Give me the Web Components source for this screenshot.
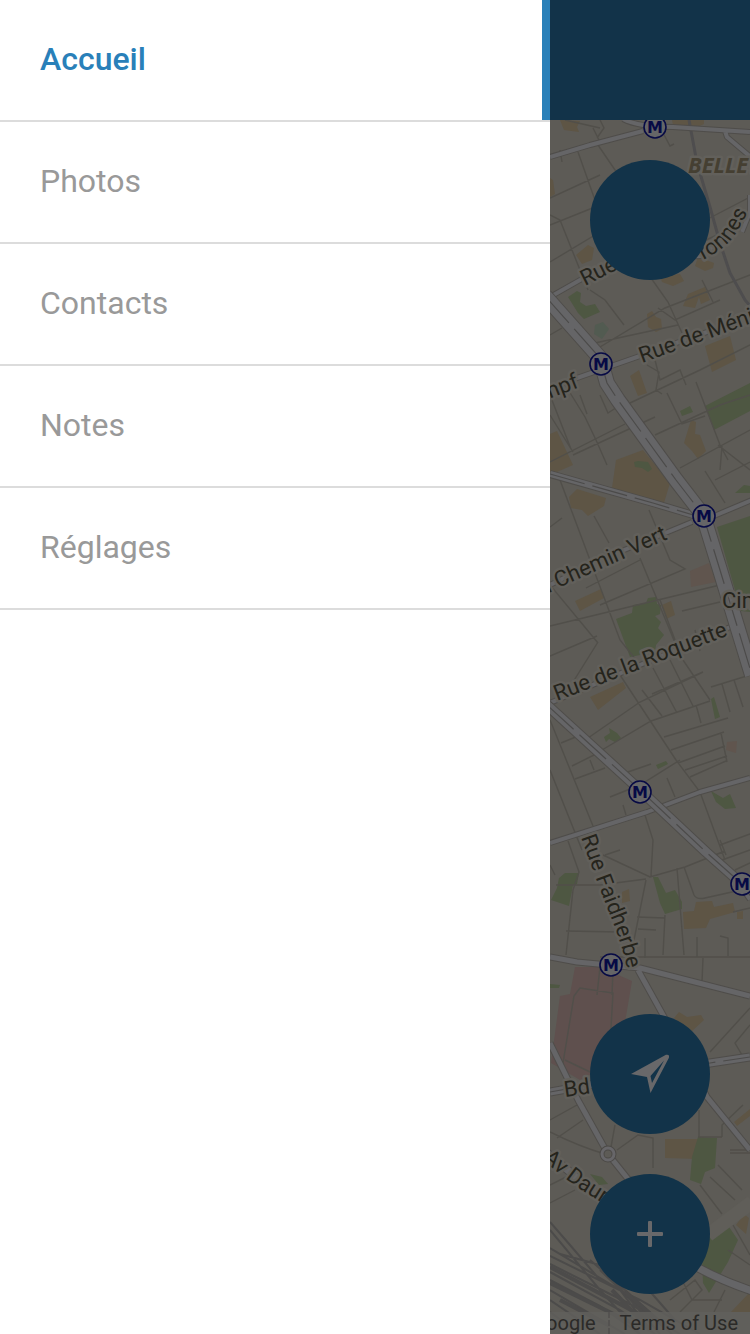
<!DOCTYPE html>
<html lang="fr">
<head>
<meta charset="utf-8">
<meta name="viewport" content="width=device-width, initial-scale=1">
<title>Accueil</title>
<style>
  body { margin: 0; font-family: Roboto, "Liberation Sans", sans-serif; background: #fff; }
</style>
</head>
<body>
<app-shell>
  <side-menu slot="menu">
    <menu-item href="#accueil" active>Accueil</menu-item>
    <menu-item href="#photos">Photos</menu-item>
    <menu-item href="#contacts">Contacts</menu-item>
    <menu-item href="#notes">Notes</menu-item>
    <menu-item href="#reglages">Réglages</menu-item>
  </side-menu>
  <title-bar slot="bar"></title-bar>
  <map-view>
    <round-button slot="top" label="Menu"></round-button>
    <round-button slot="bottom" label="Ma position">
      <svg width="40" height="40" viewBox="0 0 40 40"><path fill="#68686a" fill-rule="evenodd" d="M1 20 36 .800Q40 0 38.800 4L20.500 39 17 23ZM34 6.500 20.500 22 22 29Z"/></svg>
    </round-button>
    <round-button slot="bottom" label="Ajouter">
      <svg width="26" height="26" viewBox="0 0 26 26"><path fill="#68686a" d="M12 0h2q1 0 1 1v10h10q1 0 1 1v2q0 1-1 1H15v10q0 1-1 1h-2q-1 0-1-1V15H1q-1 0-1-1v-2q0-1 1-1h10V1q0-1 1-1Z"/></svg>
    </round-button>
  </map-view>
</app-shell>

<template id="shell">
  <style>
    :host { display: flex; min-height: 100vh; overflow: hidden; }
    .menu { flex: 0 0 550px; max-width: 80%; background: #fff; z-index: 1; }
    main { flex: 1; min-width: 0; display: flex; flex-direction: column; overflow: hidden; }
  </style>
  <div class="menu"><slot name="menu"></slot></div>
  <main><slot name="bar"></slot><slot></slot></main>
</template>

<template id="menu">
  <style>:host { display: block; } nav { display: flex; flex-direction: column; }</style>
  <nav aria-label="Menu principal"><slot></slot></nav>
</template>

<template id="item">
  <style>
    :host { display: block; border-bottom: 2px solid #dcdcdc; }
    a { display: block; padding: 0 40px; font-size: 32px; line-height: 118px; padding-bottom: 2px; color: #999; text-decoration: none; }
    :host([active]) a { color: #2980b9; font-weight: 500; border-right: 8px solid #2980b9; }
  </style>
  <a><slot></slot></a>
</template>

<template id="bar">
  <style>:host { display: block; } header { height: 120px; background: #123349; }</style>
  <header></header>
</template>

<template id="round">
  <style>
    :host { display: block; }
    button { display: flex; align-items: center; justify-content: center; width: 120px; height: 120px; padding: 0; border: 0; border-radius: 50%; background: #123349; }
  </style>
  <button type="button"><slot></slot></button>
</template>

<template id="map">
  <style>
    :host { flex: 1; display: flex; flex-direction: column; position: relative; background: #5d5b56; overflow: hidden; }
    .tiles { position: absolute; inset: 0; width: 100%; height: 100%; }
    .controls { position: relative; flex: 1; display: flex; flex-direction: column; align-items: center; justify-content: space-between; padding: 40px 0 18px; }
    .group { display: flex; flex-direction: column; gap: 40px; }
    footer { position: relative; display: flex; justify-content: flex-end; height: 22px; padding-right: 12px; background: #62605ccc; font-size: 20px; line-height: 22px; color: #2b2a28; white-space: nowrap; }
    footer a { color: inherit; text-decoration: none; }
    footer a + a { margin-left: 12px; padding-left: 10px; border-left: 2px dashed #545250; }
    .street { fill: none; stroke: #514f4a; stroke-width: 1.400; }
    .case { fill: none; stroke: #4f4d4a; stroke-linejoin: round; }
    .road { fill: none; stroke: #656567; stroke-linejoin: round; }
    .lane { fill: none; stroke: #4c4b4a; stroke-width: 1.200; stroke-dasharray: 36 8; }
    .tan { fill: #5e5545; } .green { fill: #4e5742; } .pink { fill: #5f504e; }
    .name { font-size: 22px; fill: #25241c; stroke: #62605b; stroke-width: 5px; stroke-linejoin: round; paint-order: stroke; }
    .name .area { font: italic bold 22px "Open Sans", sans-serif; fill: #453f32; }
    .metro circle { fill: #656567; stroke: #070a45; stroke-width: 1.600; }
    .metro text { font: bold 16px "DejaVu Sans", sans-serif; fill: #070a45; text-anchor: middle; }
  </style>
  <svg class="tiles" viewBox="550 120 200 1214" preserveAspectRatio="xMinYMin slice" aria-label="Plan">
    <defs>
      <path id="pMain" d="M545 296 600 358 607 383 618 400 676 480 703 515 720 570 752 675"/>
      <path id="pVolt" d="M550 474 653 503 700 517"/>
      <path id="pSouth" d="M547 705 640 790 706 852 742 884 752 898"/>
      <path id="pMid" d="M550 843 647 812 700 792 750 778"/>
      <path id="pFaid" d="M550 957 577 962 640 968 750 996M638 970 663 1015 707 1097 750 1150"/>
      <path id="pDid" d="M550 1092 710 1063 750 1057"/>
      <path id="pWest" d="M550 1043 578 1100 608 1154 632 1184"/>
      <path id="pDau" d="M546 1152 600 1197 640 1230Q690 1270 752 1291"/>
      <path id="pTop" d="M550 157 590 145 643 131M623 119Q638 127 673 127L750 132M725 131 727 137 752 158M750 195V212L742 232M550 297 580 280 625 260 700 256 730 235"/>
      <path id="pMen" d="M550 388 577 378 637 357 752 316M550 585 600 560 692 522M714 516 752 500M550 703 640 665 735 625"/>
      <path id="curveA" d="M703 260Q727 248 736 233T760 190"/>
      <path id="curveB" d="M542 1159Q566 1180 580 1189T625 1217"/>
      <path id="curveC" d="M581 837Q598 885 612 920T630 985"/>
    </defs>

    <g class="tan">
      <path d="M560 120 580 121 577 127 579 132 564 130ZM672 120H704V124L697 127 673 125ZM550 178 553 180 555 194 550 197ZM576 255 588 245 594 248 592 260 582 264ZM698 257 714 263 713 268 705 271 695 266ZM660 276 680 274 684 281 673 286 662 282ZM647 314 652 311 656 317 661 319 662 329 656 332 648 327ZM688 294 705 287 710 300 701 304 699 297 695 308 683 306ZM705 346 730 336 736 360 712 372ZM630 376 639 370 647 393 638 396ZM550 434 557 431 573 465 550 475ZM616 460 643 450 670 483 664 503 612 488ZM684 443 691 420 696 422 695 434 700 435 706 451 698 459 692 451ZM569 497 577 489 606 498 604 506 588 516 582 510 571 508ZM575 601 601 589 604 598 580 611ZM662 605 671 601 675 615 666 619ZM590 697 623 682 626 688 598 710ZM683 912 694 911 696 902 712 901 714 907 733 903 735 912 710 919 706 928 684 929ZM737 912 743 911 743 919 737 919ZM622 892 629 889 630 901 622 903ZM674 1018 679 1012 687 1017 701 1015 704 1020 691 1032 681 1025ZM665 1139 698 1139 698 1159 665 1158ZM734 1122 750 1109 750 1116 737 1126ZM736 1225 744 1214 749 1218 746 1234ZM731 1312 750 1292 750 1312Z"/>
    </g>
    <g class="green">
      <path d="M568 297 577 291 581 293 580 302 586 306 595 304 600 312 584 319 578 313ZM705 406 750 383 750 411 714 430ZM680 411 690 406 693 412 682 416ZM634 462 638 461 648 462 652 469 648 472 642 468 635 467ZM717 527 750 516 750 612 741 611ZM735 493 744 485 750 486 750 493ZM616 619 632 613 633 605 646 603 648 598 656 597 657 604 661 605 660 614 655 616 661 622 658 628 664 635 656 645 655 652 630 657ZM711 699 714 697 720 717 715 719ZM604 737 610 733 609 728 617 733 621 738 615 742 609 739 606 742ZM656 765 666 761 668 764 658 769ZM711 791 723 798 730 794 736 808 725 809 716 802ZM559 878 565 873 579 873 577 884 573 885 569 906 551 900 557 888ZM653 877 658 877 666 893 675 890 682 902 682 909 665 914 660 903ZM550 984 560 985 559 988 550 988ZM698 1137 717 1138 715 1168 705 1172 701 1184 690 1180 692 1157ZM709 1227 725 1221 738 1240 728 1262 709 1293 703 1283 702 1260ZM590 1174 602 1177 608 1184 599 1185Z"/>
    </g>
    <path d="M595 325 603 322 609 329 602 339 594 334Z" fill="#525b51"/>
    <path class="pink" d="M575 967 600 967 632 981 622 1040 595 1072 580 1080 551 1063 560 996 570 994Z"/>
    <path d="M690 571 709 563 716 582 691 587ZM727 742 737 741 736 753 726 750Z" fill="#60554e"/>

    <path class="street" d="M578 152 602 220 618 260M598 145 630 192M550 198 600 175M550 215 560 220 588 290M550 225 600 205M565 120 600 128M593 128 600 142M550 262 600 232M600 120 604 128 597 138M702 222 750 197M706 240 750 220M660 127 670 146 674 144M560 150 562 162M590 290 605 300 624 325M595 343 678 325M595 350 665 308 750 275M651 278 668 302 682 333M658 308 675 320 720 300M702 280 713 302M550 335 562 328M564 383 585 417 596 440 607 465M550 415 573 452M550 462 625 424M573 455 655 417M600 395 608 413 628 400M630 403 700 370 750 345M655 360 660 380 680 370 686 385M647 365 659 372 656 390 662 394M667 393 682 424 705 416M696 382 720 445 728 460M655 435 720 405 750 395M680 468 750 430M718 445 750 470M722 446 720 470M550 395 571 449M580 395 587 414M705 471 725 503M715 480 750 462M560 480 620 640 636 660M550 527 562 518M594 516 609 543M649 510 670 560 685 569 600 605M550 626 720 585M586 588 640 560M640 558 678 650M550 585 598 643M550 656 597 636M568 690 598 642M682 611 720 602M660 600 675 640M695 630 700 651M588 738 640 702 703 672M561 743 583 734M602 750 651 721 710 701M572 766 604 750M575 779 605 768M590 760 594 770M610 797 640 785 680 760M625 773 651 764M620 675 651 722 676 760 700 792 725 860M642 690 662 716M653 668 677 713M670 660 693 706M683 660 710 700M652 694 703 672M696 705 701 723M711 687 750 675M722 684 730 712M734 680 743 707M664 737 728 718M671 750 724 732M678 763 725 746M685 770 727 756M690 777 726 761M721 733 727 762M550 720 593 826M550 770 582 850M623 805 626 815M667 778 675 797M645 815 653 840 651 876M568 841 579 872 573 890 566 955M556 885 600 885 646 879M550 865 555 875M603 855 650 877 685 867 725 851M605 855 620 850M646 880 632 950M637 917 665 918M638 929 656 930M645 938V958M566 931 620 932M600 957H750M677 868 684 955M665 915 663 955M684 867 694 895Q697 900 705 898L750 888M697 937V957M720 936 728 938V956M733 912 750 908M735 870 750 863M703 958 702 982M720 840 726 855M600 967 597 995M613 970 612 995M563 1063 574 996 580 988 613 993 610 1045M565 1060 590 1072M720 845 750 834M722 860 750 850M710 1052 750 1008M750 1025 735 1043 742 1055M550 1120 577 1105M557 1138 583 1120M550 1132Q580 1147 605 1154M615 1125 611 1147M617 1150 638 1135 653 1138V1168M699 1110V1137M722 1137V1125L743 1105M698 1137H722M730 1150H750M730 1153H750M550 1185 570 1175M550 1203 575 1190M700 1185 722 1214M710 1177 735 1200M718 1165 742 1190M703 1240 750 1205M733 1225 750 1255M728 1250 750 1265M670 1300 695 1280 702 1290 680 1312M682 1280 692 1300 722 1300M725 1290 714 1312"/>
    <path d="M689 120 697 163 710 207 720 243 730 273 745 300 752 308" fill="none" stroke="#4e4d4e" stroke-width="3"/>
    <path d="M708 1235 752 1202" fill="none" stroke="#605e59" stroke-width="14"/>

    <g fill="none" stroke="#4c4b4a" stroke-width="2">
      <path d="M550 1230 600 1290 640 1334M550 1222 570 1245 600 1280M550 1256 640 1300 700 1334M550 1264 630 1304 680 1334M550 1272 620 1310 655 1334M550 1280 600 1306 640 1334M550 1290 625 1334M550 1300 600 1334M550 1248 620 1290 650 1330M560 1254 600 1265 660 1334M590 1260 625 1290 670 1330M600 1270 650 1318M620 1290 672 1334M618 1288 640 1280 675 1320M550 1312 580 1334"/>
      <path stroke-width="4" d="M550 1267 650 1320M550 1283 630 1322M560 1300 610 1326M612 1290 650 1330M625 1292 664 1326"/>
    </g>

    <use href="#pTop" class="case" stroke-width="6"/><use href="#pTop" class="road" stroke-width="4"/>
    <use href="#pMen" class="case" stroke-width="6"/><use href="#pMen" class="road" stroke-width="4"/>
    <use href="#pMid" class="case" stroke-width="6"/><use href="#pMid" class="road" stroke-width="4"/>
    <use href="#pVolt" class="case" stroke-width="8"/><use href="#pVolt" class="road" stroke-width="6"/><use href="#pVolt" class="lane"/>
    <use href="#pFaid" class="case" stroke-width="7"/><use href="#pFaid" class="road" stroke-width="5"/>
    <use href="#pDid" class="case" stroke-width="9"/><use href="#pDid" class="road" stroke-width="7"/><use href="#pDid" class="lane"/>
    <use href="#pWest" class="case" stroke-width="7"/><use href="#pWest" class="road" stroke-width="5"/>
    <use href="#pDau" class="case" stroke-width="9"/><use href="#pDau" class="road" stroke-width="7"/>
    <use href="#pSouth" class="case" stroke-width="11"/><use href="#pSouth" class="road" stroke-width="9"/><use href="#pSouth" class="lane"/>
    <use href="#pMain" class="case" stroke-width="16"/><use href="#pMain" class="road" stroke-width="14"/><use href="#pMain" class="lane"/>
    <circle cx="608" cy="1154" r="6" fill="#5d5b56" stroke="#4c4a47" stroke-width="5"/>
    <circle cx="608" cy="1154" r="6" fill="none" stroke="#676669" stroke-width="3"/>

    <g class="name">
      <text class="area" x="688" y="173">BELLEVILLE</text>
      <text transform="translate(585 286) rotate(-27)">Rue</text>
      <text><textPath href="#curveA">ronnes</textPath></text>
      <text transform="translate(642 363) rotate(-20)">Rue de Ménil</text>
      <text transform="translate(580 387) rotate(-21)" text-anchor="end">mpf</text>
      <text transform="translate(558 588) rotate(-24)">Chemin Vert</text>
      <text transform="translate(553 591) rotate(-24)" text-anchor="end">u</text>
      <text x="722" y="608">Cimetière</text>
      <text transform="translate(557 701) rotate(-21)">Rue de la Roquette</text>
      <text><textPath href="#curveC">Rue Faidherbe</textPath></text>
      <text transform="translate(565 1097) rotate(-8)">Bd</text>
      <text><textPath href="#curveB">Av Daum</textPath></text>
    </g>
    <g class="metro">
      <g transform="translate(655 127)"><circle r="11"/><text y="6">M</text></g>
      <g transform="translate(601 364)"><circle r="11"/><text y="6">M</text></g>
      <g transform="translate(704 516)"><circle r="11"/><text y="6">M</text></g>
      <g transform="translate(640 792)"><circle r="11"/><text y="6">M</text></g>
      <g transform="translate(742 884)"><circle r="11"/><text y="6">M</text></g>
      <g transform="translate(611 965)"><circle r="11"/><text y="6">M</text></g>
    </g>
  </svg>
  <div class="controls">
    <div class="group"><slot name="top"></slot></div>
    <div class="group"><slot name="bottom"></slot></div>
  </div>
  <footer><a href="#google">Google</a><a href="#terms">Terms of Use</a></footer>
</template>

<script>
  class Base extends HTMLElement {
    constructor() {
      super();
      const source = document.getElementById(this.constructor.template);
      this.attachShadow({ mode: "open" }).append(source.content.cloneNode(true));
    }
  }
  class AppShell extends Base { static template = "shell"; }
  class SideMenu extends Base { static template = "menu"; }
  class TitleBar extends Base { static template = "bar"; }
  class MapView extends Base { static template = "map"; }
  class MenuItem extends Base {
    static template = "item";
    connectedCallback() {
      const link = this.shadowRoot.querySelector("a");
      link.href = this.getAttribute("href");
      if (this.hasAttribute("active")) link.setAttribute("aria-current", "page");
    }
  }
  class RoundButton extends Base {
    static template = "round";
    connectedCallback() {
      this.shadowRoot.querySelector("button").setAttribute("aria-label", this.getAttribute("label"));
    }
  }
  customElements.define("app-shell", AppShell);
  customElements.define("side-menu", SideMenu);
  customElements.define("title-bar", TitleBar);
  customElements.define("map-view", MapView);
  customElements.define("menu-item", MenuItem);
  customElements.define("round-button", RoundButton);
</script>
</body>
</html>
